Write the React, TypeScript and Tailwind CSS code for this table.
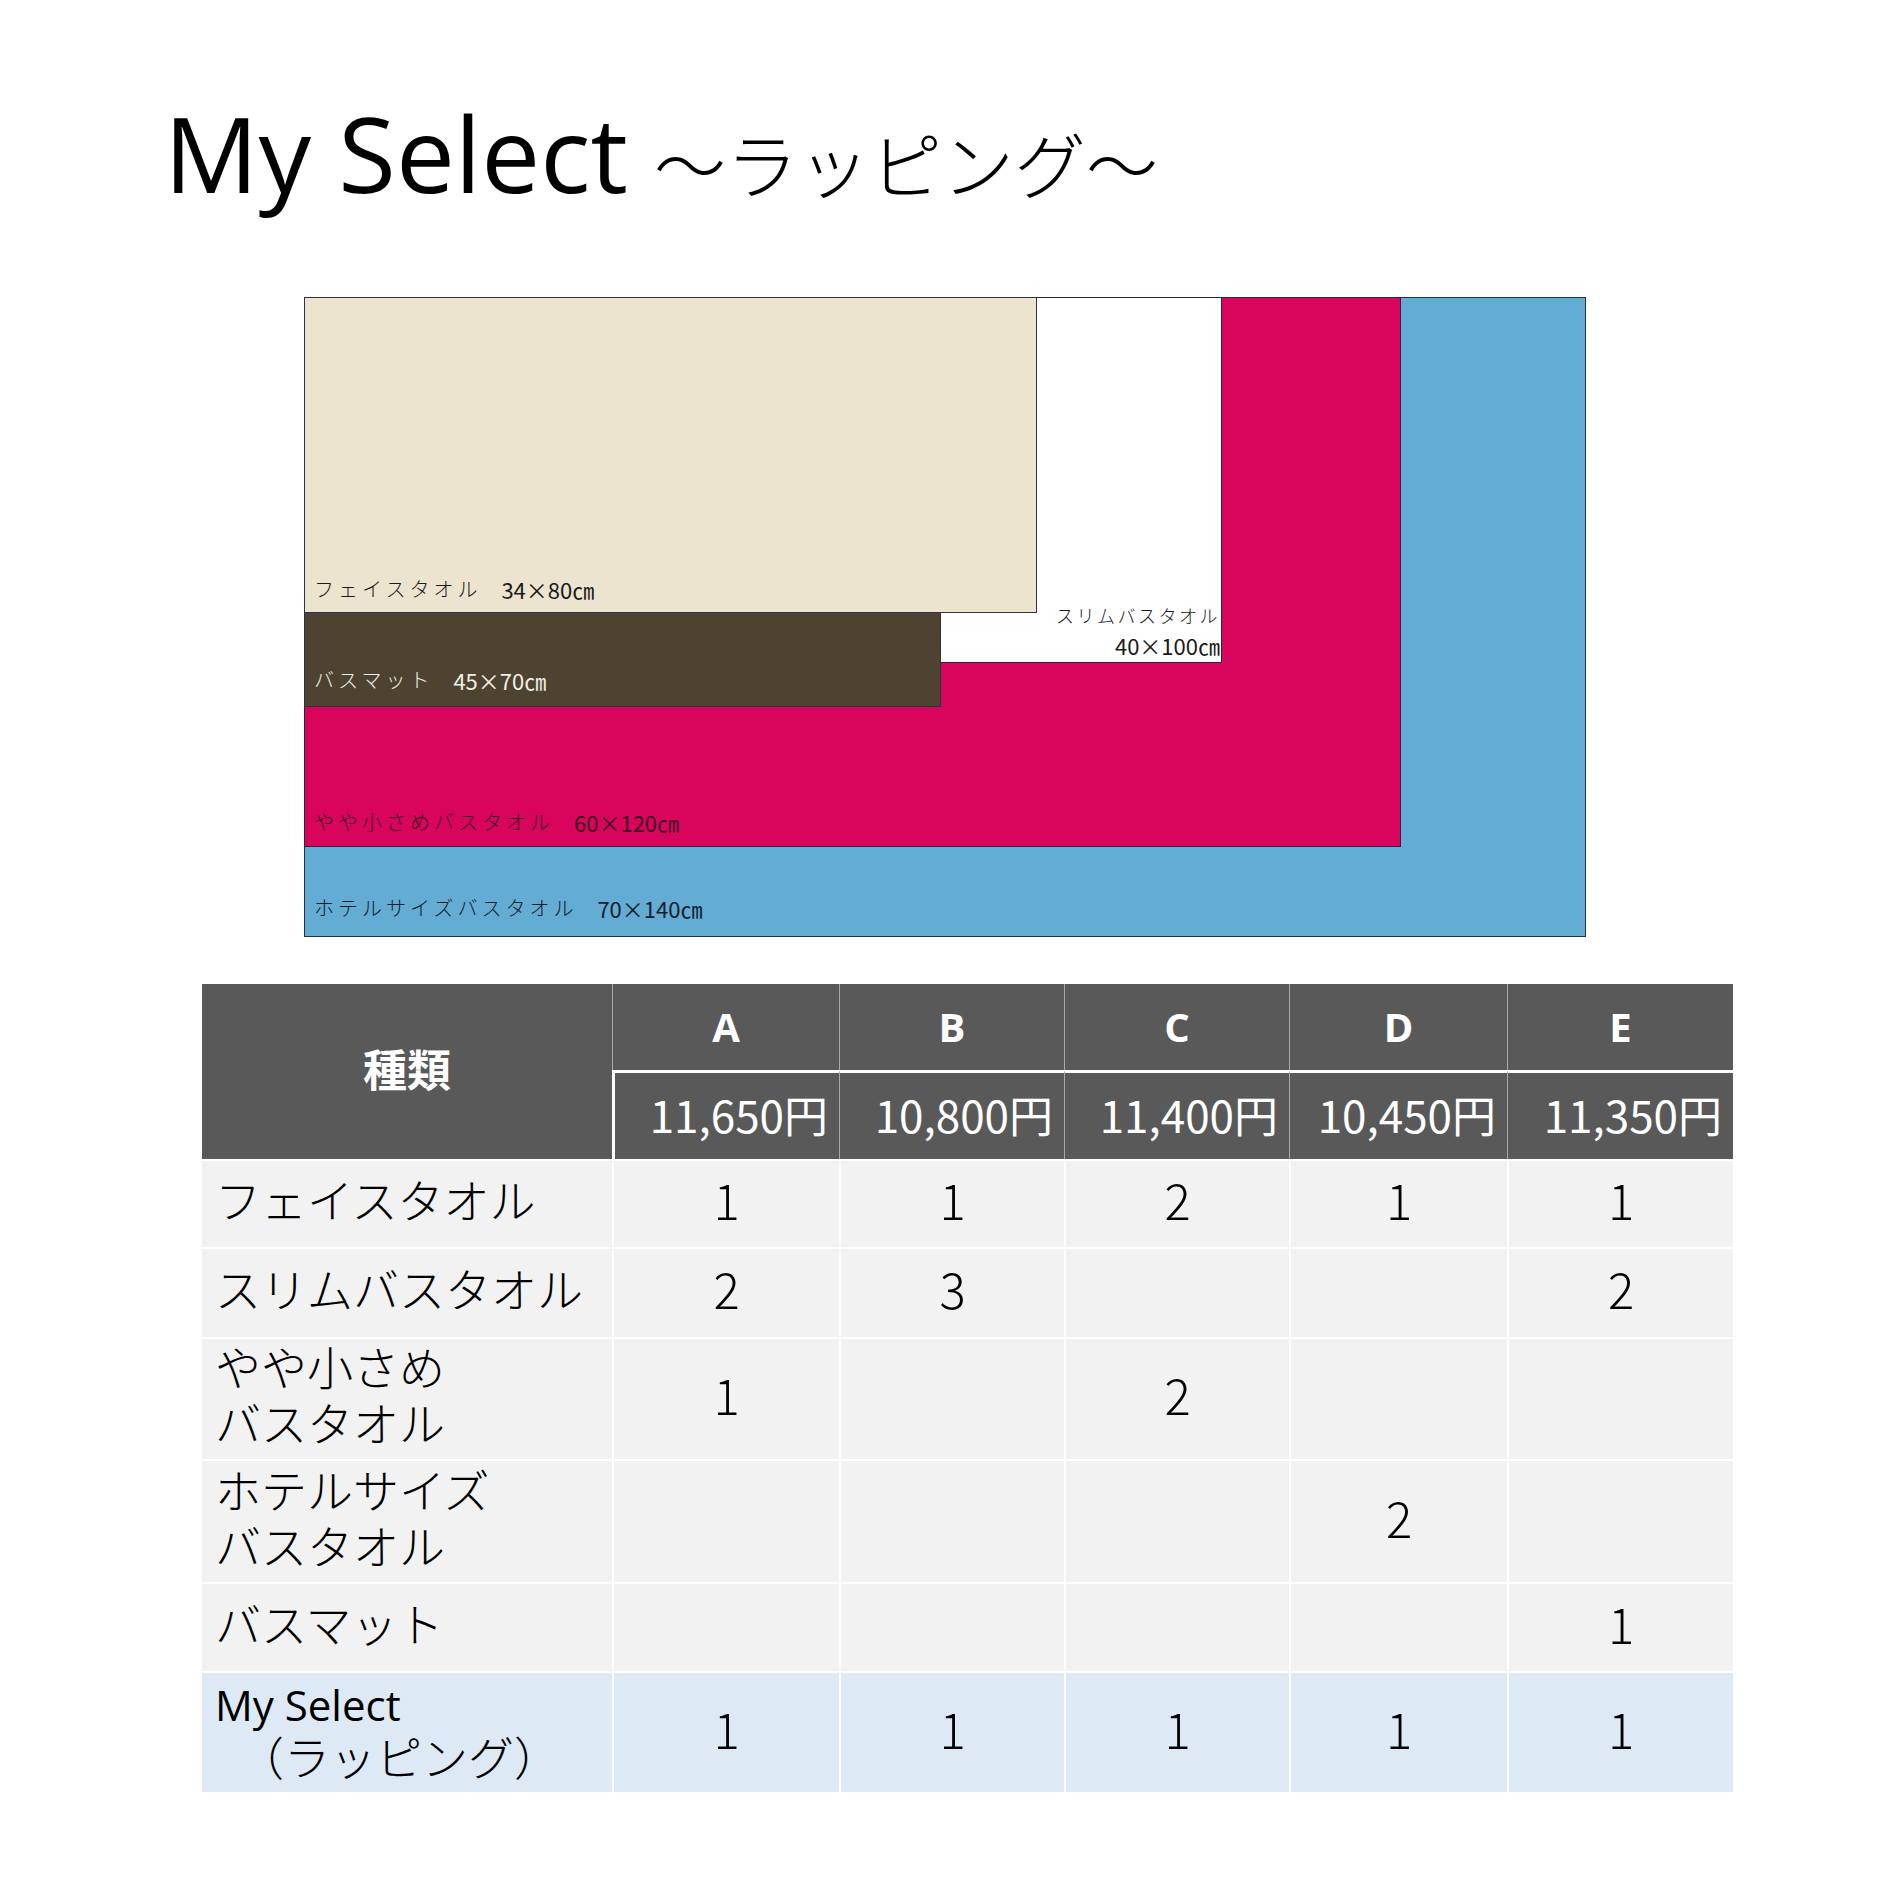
const JP = "font-['Noto_Sans_CJK_JP',sans-serif]";

const columns = ["A", "B", "C", "D", "E"];
const prices = ["11,650円", "10,800円", "11,400円", "10,450円", "11,350円"];

const rows: { label: string[]; counts: string[] }[] = [
  { label: ["フェイスタオル"], counts: ["1", "1", "2", "1", "1"] },
  { label: ["スリムバスタオル"], counts: ["2", "3", "", "", "2"] },
  { label: ["やや小さめ", "バスタオル"], counts: ["1", "", "2", "", ""] },
  { label: ["ホテルサイズ", "バスタオル"], counts: ["", "", "", "2", ""] },
  { label: ["バスマット"], counts: ["", "", "", "", "1"] },
];

const SizeLabel = ({ name, size, className }: { name: string; size: string; className: string }) => (
  <div className={`absolute left-[10px] flex items-center whitespace-nowrap leading-none ${className}`}>
    <span className={`${JP} text-[20px] font-light tracking-[4px]`}>{name}</span>
    <span className={`${JP} ml-[20px] text-[22px]`}>{size}</span>
  </div>
);

const TowelDiagram = () => (
  <div className="relative ml-[304px] h-[640px] w-[1282px]">
    {/* biggest first, each one drawn over the previous */}
    <div className="absolute left-0 top-0 h-[640px] w-[1282px] border border-[#1f3048] bg-[#63acd4]" />
    <div className="absolute left-0 top-0 h-[550px] w-[1097px] border border-[#2a2440] bg-[#d9045c]" />
    <div className="absolute left-0 top-0 h-[366px] w-[918px] border border-[#2a2440] bg-white" />
    <div className="absolute left-0 top-0 h-[316px] w-[733px] border border-[#2a3444] bg-[#ede4d0]" />
    <div className="absolute left-0 top-[315px] h-[95px] w-[637px] border border-[#2a3444] bg-[#4d4330]" />

    <SizeLabel name="フェイスタオル" size="34×80㎝" className="top-[281px] text-[#1a1a1a]" />
    <SizeLabel name="バスマット" size="45×70㎝" className="top-[372px] text-[#f2efe8]" />
    <SizeLabel name="やや小さめバスタオル" size="60×120㎝" className="top-[514px] text-[#3b0c20]" />
    <SizeLabel name="ホテルサイズバスタオル" size="70×140㎝" className="top-[600px] text-[#14202c]" />

    <div className="absolute right-[366px] top-[309px] flex flex-col items-end leading-none text-[#1a1a1a]">
      <span className={`${JP} text-[18px] font-light tracking-[2.5px]`}>スリムバスタオル</span>
      <span className={`${JP} mt-[10px] text-[22px]`}>40×100㎝</span>
    </div>
  </div>
);

const PlanTable = () => (
  <div className="ml-[202px] mt-[47px] grid w-[1531px] grid-cols-[410px_227px_225px_225px_218px_226px] grid-rows-[86px_89px_88px_90px_122px_123px_89px_121px]">
    <div className={`row-span-2 flex items-center justify-center bg-[#595959] pb-[8px] text-[44px] font-bold text-white ${JP}`}>
      種類
    </div>
    {columns.map((c) => (
      <div
        key={c}
        className="flex items-center justify-center border-l border-[#a9a9a9] bg-[#595959] font-['Open_Sans',sans-serif] text-[40px] font-bold text-white"
      >
        {c}
      </div>
    ))}
    {prices.map((p, i) => (
      <div
        key={p}
        className={`flex items-center justify-end border-t-[3px] border-t-white bg-[#595959] pb-[4px] pr-[11px] text-[44px] text-white ${JP} ${
          i === 0 ? "border-l-[3px] border-l-white" : "border-l border-l-[#a9a9a9]"
        }`}
      >
        {p}
      </div>
    ))}

    {rows.map((r) => (
      <>
        <div
          key={r.label.join("")}
          className={`flex items-center border-t-2 border-white bg-[#f2f2f2] pb-[12px] pl-[13px] text-[46px] font-light leading-[56px] text-black ${JP}`}
        >
          <p>
            {r.label[0]}
            {r.label[1] && (
              <>
                <br />
                {r.label[1]}
              </>
            )}
          </p>
        </div>
        {r.counts.map((n, i) => (
          <div
            key={r.label.join("") + i}
            className={`flex items-center justify-center border-l-2 border-t-2 border-white bg-[#f2f2f2] pb-[10px] text-[49px] font-light text-black ${JP}`}
          >
            {n}
          </div>
        ))}
      </>
    ))}

    <div className="flex items-center border-t-2 border-white bg-[#dde9f5] pb-[10px] pl-[13px] text-black">
      <p className={`${JP} text-[46px] font-light leading-[50px]`}>
        <span className="font-['Open_Sans',sans-serif] text-[42px] font-normal">My Select</span>
        <br />
        {"\u3000（ラッピング）"}
      </p>
    </div>
    {columns.map((c) => (
      <div
        key={"my" + c}
        className={`flex items-center justify-center border-l-2 border-t-2 border-white bg-[#dde9f5] pb-[10px] text-[49px] font-light text-black ${JP}`}
      >
        1
      </div>
    ))}
  </div>
);

export default function App() {
  return (
    <div className="min-h-[1890px] w-[1890px] bg-white pb-[98px]">
      <h1 className="flex items-baseline pl-[164px] pt-[100px] leading-none text-black">
        <span className="font-['Open_Sans',sans-serif] text-[105px] font-normal">My Select</span>
        <span className={`ml-[26px] text-[72px] font-light ${JP}`}>～ラッピング～</span>
      </h1>
      <div className="mt-[92px]">
        <TowelDiagram />
      </div>
      <PlanTable />
    </div>
  );
}
